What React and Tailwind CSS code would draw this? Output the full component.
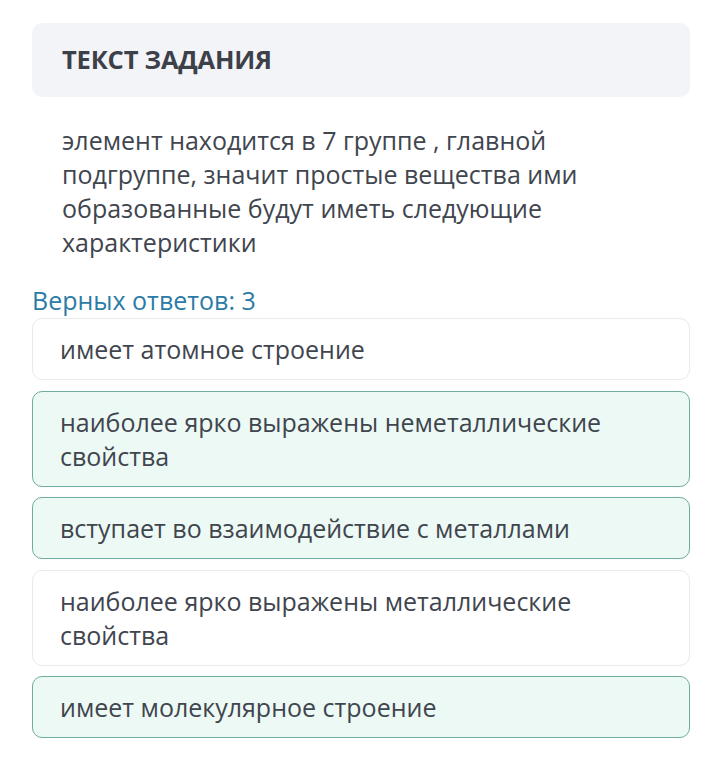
export default function App() {
  const opts = [
    { t: "имеет атомное строение", c: false },
    { t: "наиболее ярко выражены неметаллические свойства", c: true },
    { t: "вступает во взаимодействие с металлами", c: true },
    { t: "наиболее ярко выражены металлические свойства", c: false },
    { t: "имеет молекулярное строение", c: true },
  ];
  return (
    <div className="w-[720px] h-[778px] bg-white pt-[23px] px-[32px] overflow-hidden" style={{ fontFamily: '"Open Sans", sans-serif' }}>
      <div className="w-[658px] h-[74px] bg-[#f3f4f7] rounded-[10px] flex items-center px-[30px]">
        <span className="text-[25.5px] font-bold text-[#3c4049] leading-none tracking-[-0.2px]">ТЕКСТ ЗАДАНИЯ</span>
      </div>
      <div className="mt-[26px] w-[658px] px-[30px] text-[25px] leading-[34px] text-[#40454e]">
        элемент находится в 7 группе , главной подгруппе, значит простые вещества ими образованные будут иметь следующие характеристики
      </div>
      <div className="mt-[24px] text-[25px] leading-[34px] text-[#2b7ba6]">Верных ответов: 3</div>
      <div className="mt-[1px] flex flex-col gap-[10.5px] w-[658px]">
        {opts.map((o, i) => (
          <div
            key={i}
            className={
              "rounded-[10px] border px-[27px] py-[13px] text-[25px] leading-[34px] text-[#40454e] " +
              (o.c ? "bg-[#edf9f5] border-[#6fada0]" : "bg-white border-[#e8eaee]")
            }
          >
            {o.t}
          </div>
        ))}
      </div>
    </div>
  );
}
